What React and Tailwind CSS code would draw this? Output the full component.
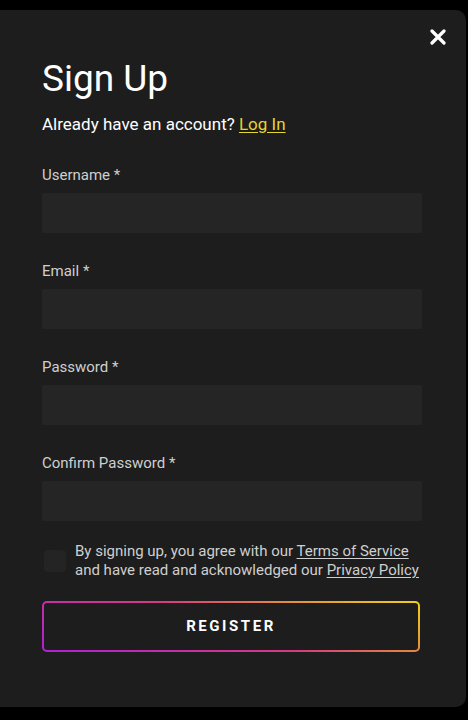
import { useState } from 'react';

const fields = ['Username', 'Email', 'Password', 'Confirm Password'];

function Field({ label }) {
  return (
    <div className="flex flex-col">
      <label className="text-[15px] leading-[20px] text-[#cfcfcf]">
        {label} <span>*</span>
      </label>
      <input
        type={label.includes('Password') ? 'password' : 'text'}
        className="mt-[8px] h-[40px] w-full bg-[#252525] rounded-[2px] outline-none px-3 text-white"
      />
    </div>
  );
}

export default function App() {
  const [agreed, setAgreed] = useState(false);

  return (
    <div className="min-h-[720px] bg-black pt-[10px] font-['Roboto',sans-serif]">
      <div className="relative w-[466px] h-[697px] bg-[#1d1d1d] rounded-r-[10px] pl-[42px] pr-[44px] pt-[47px]">
        <button className="absolute right-[20px] top-[19px] text-white">
          <svg width="16" height="16" viewBox="0 0 16 16">
            <path d="M2 2 L14 14 M14 2 L2 14" stroke="currentColor" strokeWidth="3.2" strokeLinecap="round" />
          </svg>
        </button>

        <h1 className="text-[37px] leading-[44px] text-white font-normal">Sign Up</h1>
        <p className="mt-[13px] text-[17px] leading-[20px] text-white">
          Already have an account?{' '}
          <a href="#" className="text-[#e5d52e] underline underline-offset-2">Log In</a>
        </p>

        <div className="mt-[31px] flex flex-col gap-[28px]">
          {fields.map((f) => (
            <Field key={f} label={f} />
          ))}
        </div>

        <div className="mt-[21px] flex items-start gap-[9px]">
          <button
            onClick={() => setAgreed(!agreed)}
            className="ml-[2px] mt-[8px] h-[22px] w-[22px] shrink-0 rounded-[4px] bg-[#242424]"
          />
          <p className="text-[15px] leading-[19px] text-[#cfcfcf]">
            By signing up, you agree with our{' '}
            <a href="#" className="underline underline-offset-2">Terms of Service</a>
            <br />
            and have read and acknowledged our{' '}
            <a href="#" className="underline underline-offset-2">Privacy Policy</a>
          </p>
        </div>

        <div className="mt-[21px] w-[378px] rounded-[5px] p-[2px] bg-[linear-gradient(20deg,#b020d8_0%,#d83a80_50%,#e8a030_80%,#f0d020_100%)]">
          <button className="h-[47px] w-full rounded-[3px] bg-[#1d1d1d] text-white text-[15px] font-bold tracking-[0.17em]">
            REGISTER
          </button>
        </div>
      </div>
    </div>
  );
}
